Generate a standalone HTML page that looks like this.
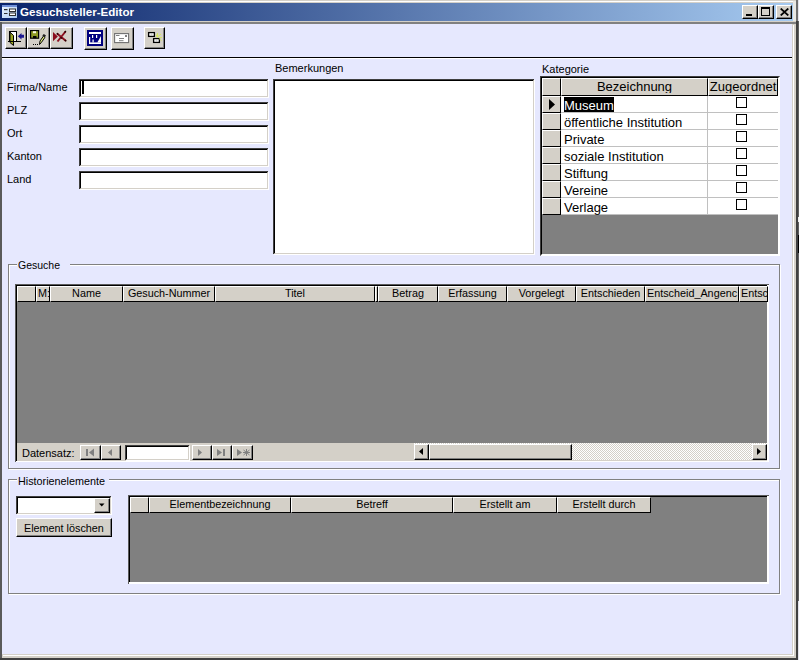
<!DOCTYPE html>
<html><head><meta charset="utf-8">
<style>
*{margin:0;padding:0;box-sizing:border-box}
html,body{width:799px;height:660px;overflow:hidden;background:#d4d0c8;font-family:"Liberation Sans",sans-serif;font-size:11px;color:#000}
.a{position:absolute}
.t{position:absolute;white-space:nowrap;line-height:1}
</style></head><body>
<div class="a" style="left:0px;top:0px;width:799px;height:660px;background:#d4d0c8"></div>
<div class="a" style="left:0px;top:1px;width:797px;height:1px;background:#fff"></div>
<div class="a" style="left:0px;top:21px;width:2px;height:639px;background:#5a5a5a"></div>
<div class="a" style="left:796px;top:21px;width:2px;height:639px;background:#404040"></div>
<div class="a" style="left:796px;top:0px;width:2px;height:21px;background:#707070"></div>
<div class="a" style="left:0px;top:658px;width:798px;height:2px;background:#404040"></div>
<div class="a" style="left:798px;top:0px;width:1px;height:660px;background:#e4e4ec"></div>
<div class="a" style="left:798px;top:21px;width:1px;height:580px;background:#606060"></div>
<div class="a" style="left:798px;top:217px;width:1px;height:5px;background:#f0f0f0"></div>
<div class="a" style="left:798px;top:235px;width:1px;height:18px;background:#000"></div>
<div class="a" style="left:0px;top:3px;width:793px;height:18px;background:linear-gradient(90deg,#0a246a 0%,#a6caf0 100%)"></div>
<div class="a" style="left:793px;top:1px;width:3px;height:20px;background:#e8e8e4"></div>
<svg class="a" style="left:2px;top:5px" width="15" height="14" viewBox="0 0 15 14">
<defs><linearGradient id="ig" x1="0" y1="0" x2="1" y2="1"><stop offset="0" stop-color="#f0f8ff"/><stop offset="1" stop-color="#a8c8f0"/></linearGradient></defs>
<rect x="0" y="0" width="15" height="13" fill="url(#ig)"/><rect x="0" y="0" width="15" height="2" fill="#7090d8"/>
<rect x="2" y="4" width="3.5" height="1.2" fill="#303030"/><rect x="7.5" y="4" width="6" height="2.5" fill="#fff" stroke="#303030" stroke-width="1"/>
<rect x="2" y="8" width="3.5" height="1" fill="#303030"/><rect x="7.5" y="8" width="6" height="2.5" fill="#fff" stroke="#303030" stroke-width="1"/>
</svg>
<div class="t" style="left:20px;top:6px;color:#fff;font-weight:bold;font-size:11.6px">Gesuchsteller-Editor</div>
<div class="a" style="left:742px;top:5px;width:16px;height:14px;background:#d4d0c8;border-top:1px solid #fff;border-left:1px solid #fff;border-right:1px solid #000;border-bottom:1px solid #000;box-shadow:inset -1px -1px 0 #808080;"></div>
<div class="a" style="left:758px;top:5px;width:16px;height:14px;background:#d4d0c8;border-top:1px solid #fff;border-left:1px solid #fff;border-right:1px solid #000;border-bottom:1px solid #000;box-shadow:inset -1px -1px 0 #808080;"></div>
<div class="a" style="left:776px;top:5px;width:16px;height:14px;background:#d4d0c8;border-top:1px solid #fff;border-left:1px solid #fff;border-right:1px solid #000;border-bottom:1px solid #000;box-shadow:inset -1px -1px 0 #808080;"></div>
<div class="a" style="left:746px;top:14px;width:6px;height:2px;background:#000"></div>
<div class="a" style="left:761px;top:7px;width:9px;height:9px;border:1px solid #000;border-top-width:2px"></div>
<svg class="a" style="left:780px;top:8px" width="9" height="8" viewBox="0 0 9 8"><path d="M0.7 0.5 L8.3 7.5 M8.3 0.5 L0.7 7.5" stroke="#000" stroke-width="1.7"/></svg>
<div class="a" style="left:0px;top:21px;width:796px;height:1px;background:#d4d0c8"></div>
<div class="a" style="left:2px;top:22px;width:794px;height:2px;background:#808080"></div>
<div class="a" style="left:2px;top:24px;width:791px;height:631px;background:#e6e8fe;border-right:1px solid #d4d0c8;border-bottom:1px solid #d4d0c8;box-shadow:1px 1px 0 #fff"></div>
<div class="a" style="left:5px;top:27px;width:22px;height:22px;background:#d4d0c8;border-top:1px solid #fff;border-left:1px solid #fff;border-right:1px solid #000;border-bottom:1px solid #000;box-shadow:inset -1px -1px 0 #808080;"></div>
<div class="a" style="left:27px;top:27px;width:23px;height:22px;background:#d4d0c8;border-top:1px solid #fff;border-left:1px solid #fff;border-right:1px solid #000;border-bottom:1px solid #000;box-shadow:inset -1px -1px 0 #808080;"></div>
<div class="a" style="left:50px;top:27px;width:23px;height:22px;background:#d4d0c8;border-top:1px solid #fff;border-left:1px solid #fff;border-right:1px solid #000;border-bottom:1px solid #000;box-shadow:inset -1px -1px 0 #808080;"></div>
<div class="a" style="left:84px;top:27px;width:23px;height:23px;background:#d4d0c8;border-top:1px solid #fff;border-left:1px solid #fff;border-right:1px solid #000;border-bottom:1px solid #000;box-shadow:inset -1px -1px 0 #808080;"></div>
<div class="a" style="left:111px;top:27px;width:23px;height:23px;background:#d4d0c8;border-top:1px solid #fff;border-left:1px solid #fff;border-right:1px solid #000;border-bottom:1px solid #000;box-shadow:inset -1px -1px 0 #808080;"></div>
<div class="a" style="left:144px;top:27px;width:21px;height:22px;background:#d4d0c8;border-top:1px solid #fff;border-left:1px solid #fff;border-right:1px solid #000;border-bottom:1px solid #000;box-shadow:inset -1px -1px 0 #808080;"></div>
<svg class="a" style="left:6px;top:29px" width="20" height="18" viewBox="0 0 20 18">
<rect x="3.5" y="2.5" width="7" height="10" fill="#fff" stroke="#000" stroke-width="1"/>
<path d="M4 3.2 L7.5 6.5 L7.5 16.5 L4 13.5 Z" fill="#9aa41e" stroke="#000" stroke-width="1"/>
<path d="M2 12.5 H15" stroke="#000" stroke-width="1"/>
<path d="M11.8 7.3 L15.5 4 V5.8 H18 V8.8 H15.5 V10.6 Z" fill="#1c1890"/>
</svg>
<svg class="a" style="left:28px;top:28px" width="20" height="19" viewBox="0 0 20 19">
<rect x="2.6" y="2.6" width="8" height="7.6" fill="#8e9a22" stroke="#000" stroke-width="1.2"/>
<rect x="5" y="3.2" width="3" height="2" fill="#f8f8e0"/>
<rect x="5" y="8" width="3.5" height="2.2" fill="#000"/>
<path d="M11.5 16.5 L12 13 L15.5 8 L17 9.3 L13.5 14.3 Z" fill="#e0ee80" stroke="#000" stroke-width="1"/>
<path d="M14.3 7.5 L15.8 6 L18 7.6 L16.8 9.2 Z" fill="#202020"/>
<path d="M5 16.5 h1 M7 16.5 h1 M9 16.5 h1" stroke="#000" stroke-width="1.1"/>
</svg>
<svg class="a" style="left:50px;top:28px" width="20" height="18" viewBox="0 0 20 18">
<path d="M3 4 L7.8 8.6 L3 13.2 Z" fill="#8a0c1c"/>
<path d="M7 5.5 L16 13 M7.5 13.5 L15.5 3.5" stroke="#8e1020" stroke-width="2"/>
<path d="M6.8 5.2 L8.3 6.5 M14.5 4.5 L16 3 M14.8 12 L16.3 13.3 M10.5 9.2 L12.2 10.6" stroke="#200000" stroke-width="1.2"/>
</svg>
<svg class="a" style="left:86px;top:29px" width="18" height="18" viewBox="0 0 18 18">
<rect x="1" y="1" width="16" height="16" fill="#000080"/>
<rect x="3" y="3" width="12" height="2" fill="#fff"/>
<rect x="3" y="8" width="1.2" height="7" fill="#fff"/>
<rect x="3" y="13.4" width="12" height="1.6" fill="#fff"/>
<rect x="6" y="6" width="1.2" height="3" fill="#fff"/><rect x="6.5" y="10.5" width="1.2" height="3" fill="#fff"/>
<rect x="10" y="6" width="1.2" height="3" fill="#fff"/>
<path d="M11.3 13.5 L15 7 V13.5 Z" fill="#fff"/>
</svg>
<svg class="a" style="left:114px;top:33px" width="16" height="11" viewBox="0 0 16 11">
<rect x="0.6" y="0.6" width="14" height="9" fill="#fff" stroke="#707070" stroke-width="1.1"/>
<path d="M2 2.5 H5.5 M5 5.5 H10 M5 7.7 H9.5" stroke="#808080" stroke-width="1"/><rect x="11" y="2" width="2" height="2" fill="#808080"/>
</svg>
<svg class="a" style="left:146px;top:29px" width="18" height="16" viewBox="0 0 18 16">
<rect x="2.6" y="3.6" width="5.8" height="3.8" fill="#fff" stroke="#000" stroke-width="1.3"/>
<rect x="7.6" y="9.6" width="5.8" height="3.8" fill="#fff" stroke="#000" stroke-width="1.3"/>
<path d="M4 4.5 L7 6.5 M7 4.5 L4 6.5 M9 10.5 L12 12.5 M12 10.5 L9 12.5" stroke="#d0d0d0" stroke-width="0.8"/>
<path d="M11.5 4 V8 M11 8.5 L15 5 M13.5 8.5 H16 M13 9.5 L15.5 11.5 M10 5.5 L11 8" stroke="#d8e860" stroke-width="1"/>
</svg>
<div class="a" style="left:2px;top:57px;width:790px;height:1px;background:#000"></div>
<div class="a" style="left:2px;top:58px;width:790px;height:1px;background:#fff"></div>
<div class="a" style="left:79px;top:79px;width:189px;height:18px;background:#fff;border-top:2px solid #000;border-left:2px solid #000;border-right:1px solid #d4d0c8;border-bottom:1px solid #d4d0c8;box-shadow:1px 1px 0 #fff, inset 0 0 0 0 #000"></div>
<div class="a" style="left:79px;top:79px;width:188px;height:1px;background:#404040"></div>
<div class="a" style="left:79px;top:79px;width:1px;height:17px;background:#404040"></div>
<div class="t" style="left:7px;top:82px;font-size:11px">Firma/Name</div>
<div class="a" style="left:79px;top:102px;width:189px;height:18px;background:#fff;border-top:2px solid #000;border-left:2px solid #000;border-right:1px solid #d4d0c8;border-bottom:1px solid #d4d0c8;box-shadow:1px 1px 0 #fff, inset 0 0 0 0 #000"></div>
<div class="a" style="left:79px;top:102px;width:188px;height:1px;background:#404040"></div>
<div class="a" style="left:79px;top:102px;width:1px;height:17px;background:#404040"></div>
<div class="t" style="left:7px;top:105px;font-size:11px">PLZ</div>
<div class="a" style="left:79px;top:125px;width:189px;height:18px;background:#fff;border-top:2px solid #000;border-left:2px solid #000;border-right:1px solid #d4d0c8;border-bottom:1px solid #d4d0c8;box-shadow:1px 1px 0 #fff, inset 0 0 0 0 #000"></div>
<div class="a" style="left:79px;top:125px;width:188px;height:1px;background:#404040"></div>
<div class="a" style="left:79px;top:125px;width:1px;height:17px;background:#404040"></div>
<div class="t" style="left:7px;top:128px;font-size:11px">Ort</div>
<div class="a" style="left:79px;top:148px;width:189px;height:18px;background:#fff;border-top:2px solid #000;border-left:2px solid #000;border-right:1px solid #d4d0c8;border-bottom:1px solid #d4d0c8;box-shadow:1px 1px 0 #fff, inset 0 0 0 0 #000"></div>
<div class="a" style="left:79px;top:148px;width:188px;height:1px;background:#404040"></div>
<div class="a" style="left:79px;top:148px;width:1px;height:17px;background:#404040"></div>
<div class="t" style="left:7px;top:151px;font-size:11px">Kanton</div>
<div class="a" style="left:79px;top:171px;width:189px;height:18px;background:#fff;border-top:2px solid #000;border-left:2px solid #000;border-right:1px solid #d4d0c8;border-bottom:1px solid #d4d0c8;box-shadow:1px 1px 0 #fff, inset 0 0 0 0 #000"></div>
<div class="a" style="left:79px;top:171px;width:188px;height:1px;background:#404040"></div>
<div class="a" style="left:79px;top:171px;width:1px;height:17px;background:#404040"></div>
<div class="t" style="left:7px;top:174px;font-size:11px">Land</div>
<div class="a" style="left:82px;top:81px;width:2px;height:13px;background:#000"></div>
<div class="t" style="left:275px;top:63px;font-size:11px">Bemerkungen</div>
<div class="a" style="left:273px;top:79px;width:261px;height:175px;background:#fff;border-top:2px solid #000;border-left:2px solid #000;border-right:1px solid #d4d0c8;border-bottom:1px solid #d4d0c8;box-shadow:1px 1px 0 #fff, inset 0 0 0 0 #000"></div>
<div class="a" style="left:273px;top:79px;width:260px;height:1px;background:#404040"></div>
<div class="a" style="left:273px;top:79px;width:1px;height:174px;background:#404040"></div>
<div class="t" style="left:542px;top:64px;font-size:11px">Kategorie</div>
<div class="a" style="left:540px;top:76px;width:240px;height:180px;background:#808080;border-left:2px solid #000;border-top:2px solid #000;border-right:2px solid #fff;border-bottom:2px solid #fff"></div>
<div class="a" style="left:540px;top:76px;width:1px;height:179px;background:#404040"></div>
<div class="a" style="left:540px;top:76px;width:239px;height:1px;background:#404040"></div>
<div class="a" style="left:561px;top:96px;width:217px;height:118px;background:#fff"></div>
<div class="a" style="left:561px;top:112px;width:217px;height:1px;background:#c0c0c0"></div>
<div class="a" style="left:561px;top:129px;width:217px;height:1px;background:#c0c0c0"></div>
<div class="a" style="left:561px;top:146px;width:217px;height:1px;background:#c0c0c0"></div>
<div class="a" style="left:561px;top:163px;width:217px;height:1px;background:#c0c0c0"></div>
<div class="a" style="left:561px;top:180px;width:217px;height:1px;background:#c0c0c0"></div>
<div class="a" style="left:561px;top:197px;width:217px;height:1px;background:#c0c0c0"></div>
<div class="a" style="left:561px;top:214px;width:217px;height:1px;background:#c0c0c0"></div>
<div class="a" style="left:707px;top:96px;width:1px;height:118px;background:#c0c0c0"></div>
<div class="a" style="left:542px;top:78px;width:19px;height:18px;background:#d4d0c8;border-left:1px solid #fff;border-top:1px solid #fff;border-right:1px solid #000;border-bottom:1px solid #000"></div>
<div class="a" style="left:561px;top:78px;width:147px;height:18px;background:#d4d0c8;border-left:1px solid #fff;border-top:1px solid #fff;border-right:1px solid #000;border-bottom:1px solid #000"></div>
<div class="a" style="left:708px;top:78px;width:70px;height:18px;background:#d4d0c8;border-left:1px solid #fff;border-top:1px solid #fff;border-right:1px solid #000;border-bottom:1px solid #000"></div>
<div class="t" style="left:561px;top:80px;width:147px;text-align:center;overflow:hidden;font-size:13px">Bezeichnung</div>
<div class="t" style="left:708px;top:80px;width:70px;text-align:center;overflow:hidden;font-size:13px">Zugeordnet</div>
<div class="a" style="left:542px;top:96px;width:19px;height:17px;background:#d4d0c8;border-left:1px solid #fff;border-top:1px solid #fff;border-right:1px solid #000;border-bottom:1px solid #000"></div>
<div class="a" style="left:564px;top:97px;width:50px;height:15px;background:#000"></div>
<div class="t" style="left:564px;top:99px;font-size:13px;color:#fff">Museum</div>
<div class="a" style="left:736px;top:97px;width:11px;height:11px;background:#fff;border:1px solid #000"></div>
<div class="a" style="left:542px;top:113px;width:19px;height:17px;background:#d4d0c8;border-left:1px solid #fff;border-top:1px solid #fff;border-right:1px solid #000;border-bottom:1px solid #000"></div>
<div class="t" style="left:564px;top:116px;font-size:13px">öffentliche Institution</div>
<div class="a" style="left:736px;top:114px;width:11px;height:11px;background:#fff;border:1px solid #000"></div>
<div class="a" style="left:542px;top:130px;width:19px;height:17px;background:#d4d0c8;border-left:1px solid #fff;border-top:1px solid #fff;border-right:1px solid #000;border-bottom:1px solid #000"></div>
<div class="t" style="left:564px;top:133px;font-size:13px">Private</div>
<div class="a" style="left:736px;top:131px;width:11px;height:11px;background:#fff;border:1px solid #000"></div>
<div class="a" style="left:542px;top:147px;width:19px;height:17px;background:#d4d0c8;border-left:1px solid #fff;border-top:1px solid #fff;border-right:1px solid #000;border-bottom:1px solid #000"></div>
<div class="t" style="left:564px;top:150px;font-size:13px">soziale Institution</div>
<div class="a" style="left:736px;top:148px;width:11px;height:11px;background:#fff;border:1px solid #000"></div>
<div class="a" style="left:542px;top:164px;width:19px;height:17px;background:#d4d0c8;border-left:1px solid #fff;border-top:1px solid #fff;border-right:1px solid #000;border-bottom:1px solid #000"></div>
<div class="t" style="left:564px;top:167px;font-size:13px">Stiftung</div>
<div class="a" style="left:736px;top:165px;width:11px;height:11px;background:#fff;border:1px solid #000"></div>
<div class="a" style="left:542px;top:181px;width:19px;height:17px;background:#d4d0c8;border-left:1px solid #fff;border-top:1px solid #fff;border-right:1px solid #000;border-bottom:1px solid #000"></div>
<div class="t" style="left:564px;top:184px;font-size:13px">Vereine</div>
<div class="a" style="left:736px;top:182px;width:11px;height:11px;background:#fff;border:1px solid #000"></div>
<div class="a" style="left:542px;top:198px;width:19px;height:17px;background:#d4d0c8;border-left:1px solid #fff;border-top:1px solid #fff;border-right:1px solid #000;border-bottom:1px solid #000"></div>
<div class="t" style="left:564px;top:201px;font-size:13px">Verlage</div>
<div class="a" style="left:736px;top:199px;width:11px;height:11px;background:#fff;border:1px solid #000"></div>
<svg class="a" style="left:548px;top:99px" width="8" height="11" viewBox="0 0 8 11"><path d="M1 0 L7 5.5 L1 11 Z" fill="#000"/></svg>
<div class="a" style="left:8px;top:264px;width:772px;height:205px;border:1px solid #808080;box-shadow:inset 1px 1px 0 #fff, 1px 1px 0 #fff"></div>
<div class="a" style="left:17px;top:258px;width:53px;height:12px;background:#e6e8fe"></div>
<div class="t" style="left:18px;top:260px;font-size:11px;font-size:10.5px">Gesuche</div>
<div class="a" style="left:15px;top:284px;width:754px;height:178px;background:#000;border-left:1px solid #5a5a5a;border-top:1px solid #5a5a5a"></div>
<div class="a" style="left:17px;top:286px;width:750px;height:157px;background:#808080"></div>
<div class="a" style="left:767px;top:285px;width:2px;height:177px;background:#fff"></div>
<div class="a" style="left:16px;top:461px;width:753px;height:1px;background:#fff"></div>
<div class="a" style="left:17px;top:286px;width:19px;height:16px;background:#d4d0c8;border-left:1px solid #fff;border-top:1px solid #fff;border-right:1px solid #000;border-bottom:1px solid #000"></div>
<div class="a" style="left:36px;top:286px;width:14px;height:16px;background:#d4d0c8;border-left:1px solid #fff;border-top:1px solid #fff;border-right:1px solid #000;border-bottom:1px solid #000"></div>
<div class="a" style="left:50px;top:286px;width:73px;height:16px;background:#d4d0c8;border-left:1px solid #fff;border-top:1px solid #fff;border-right:1px solid #000;border-bottom:1px solid #000"></div>
<div class="a" style="left:123px;top:286px;width:92px;height:16px;background:#d4d0c8;border-left:1px solid #fff;border-top:1px solid #fff;border-right:1px solid #000;border-bottom:1px solid #000"></div>
<div class="a" style="left:215px;top:286px;width:160px;height:16px;background:#d4d0c8;border-left:1px solid #fff;border-top:1px solid #fff;border-right:1px solid #000;border-bottom:1px solid #000"></div>
<div class="a" style="left:375px;top:286px;width:3px;height:16px;background:#d4d0c8;border-left:1px solid #fff;border-top:1px solid #fff;border-right:1px solid #000;border-bottom:1px solid #000"></div>
<div class="a" style="left:378px;top:286px;width:60px;height:16px;background:#d4d0c8;border-left:1px solid #fff;border-top:1px solid #fff;border-right:1px solid #000;border-bottom:1px solid #000"></div>
<div class="a" style="left:438px;top:286px;width:69px;height:16px;background:#d4d0c8;border-left:1px solid #fff;border-top:1px solid #fff;border-right:1px solid #000;border-bottom:1px solid #000"></div>
<div class="a" style="left:507px;top:286px;width:69px;height:16px;background:#d4d0c8;border-left:1px solid #fff;border-top:1px solid #fff;border-right:1px solid #000;border-bottom:1px solid #000"></div>
<div class="a" style="left:576px;top:286px;width:69px;height:16px;background:#d4d0c8;border-left:1px solid #fff;border-top:1px solid #fff;border-right:1px solid #000;border-bottom:1px solid #000"></div>
<div class="a" style="left:645px;top:286px;width:94px;height:16px;background:#d4d0c8;border-left:1px solid #fff;border-top:1px solid #fff;border-right:1px solid #000;border-bottom:1px solid #000"></div>
<div class="a" style="left:739px;top:286px;width:29px;height:16px;background:#d4d0c8;border-left:1px solid #fff;border-top:1px solid #fff;border-right:1px solid #000;border-bottom:1px solid #000"></div>
<div class="t" style="left:38px;top:288px;font-size:10.8px">M:</div>
<div class="t" style="left:50px;top:288px;width:73px;text-align:center;overflow:hidden;font-size:10.8px">Name</div>
<div class="t" style="left:123px;top:288px;width:92px;text-align:center;overflow:hidden;font-size:10.8px">Gesuch-Nummer</div>
<div class="t" style="left:215px;top:288px;width:160px;text-align:center;overflow:hidden;font-size:10.8px">Titel</div>
<div class="t" style="left:378px;top:288px;width:60px;text-align:center;overflow:hidden;font-size:10.8px">Betrag</div>
<div class="t" style="left:438px;top:288px;width:69px;text-align:center;overflow:hidden;font-size:10.8px">Erfassung</div>
<div class="t" style="left:507px;top:288px;width:69px;text-align:center;overflow:hidden;font-size:10.8px">Vorgelegt</div>
<div class="t" style="left:576px;top:288px;width:69px;text-align:center;overflow:hidden;font-size:10.8px">Entschieden</div>
<div class="t" style="left:647px;top:288px;width:91px;overflow:hidden;font-size:10.8px">Entscheid_Angenc</div>
<div class="t" style="left:741px;top:288px;width:26px;overflow:hidden;font-size:10.8px">Entsc</div>
<div class="a" style="left:17px;top:443px;width:750px;height:18px;background:#d4d0c8"></div>
<div class="t" style="left:22px;top:448px;font-size:11px">Datensatz:</div>
<div class="a" style="left:80px;top:445px;width:21px;height:15px;background:#d4d0c8;border-top:1px solid #fff;border-left:1px solid #fff;border-right:1px solid #000;border-bottom:1px solid #000;box-shadow:inset -1px -1px 0 #808080;"></div>
<div class="a" style="left:101px;top:445px;width:20px;height:15px;background:#d4d0c8;border-top:1px solid #fff;border-left:1px solid #fff;border-right:1px solid #000;border-bottom:1px solid #000;box-shadow:inset -1px -1px 0 #808080;"></div>
<div class="a" style="left:192px;top:445px;width:20px;height:15px;background:#d4d0c8;border-top:1px solid #fff;border-left:1px solid #fff;border-right:1px solid #000;border-bottom:1px solid #000;box-shadow:inset -1px -1px 0 #808080;"></div>
<div class="a" style="left:212px;top:445px;width:20px;height:15px;background:#d4d0c8;border-top:1px solid #fff;border-left:1px solid #fff;border-right:1px solid #000;border-bottom:1px solid #000;box-shadow:inset -1px -1px 0 #808080;"></div>
<div class="a" style="left:232px;top:445px;width:21px;height:15px;background:#d4d0c8;border-top:1px solid #fff;border-left:1px solid #fff;border-right:1px solid #000;border-bottom:1px solid #000;box-shadow:inset -1px -1px 0 #808080;"></div>
<div class="a" style="left:125px;top:445px;width:64px;height:15px;background:#fff;border-top:2px solid #000;border-left:2px solid #000;border-right:1px solid #d4d0c8;border-bottom:1px solid #d4d0c8;box-shadow:1px 1px 0 #fff, inset 0 0 0 0 #000"></div>
<div class="a" style="left:125px;top:445px;width:63px;height:1px;background:#404040"></div>
<div class="a" style="left:125px;top:445px;width:1px;height:14px;background:#404040"></div>
<svg class="a" style="left:80px;top:445px" width="173" height="15" viewBox="0 0 173 15">
<g fill="#808080">
<rect x="6" y="4" width="2" height="7"/><path d="M9 7.5 L14 3.5 V11.5 Z"/>
<path d="M28 7.5 L32 4 V11 Z"/>
<path d="M118 4 L122 7.5 L118 11 Z"/>
<path d="M137 4 L142 7.5 L137 11 Z"/><rect x="143" y="4" width="2" height="7"/>
<path d="M157 4 L162 7.5 L157 11 Z"/>
</g>
<path d="M163.5 5 L169.5 10 M169.5 5 L163.5 10 M166.5 4 V11 M163 7.5 H170" stroke="#808080" stroke-width="1"/>
</svg>
<div class="a" style="left:414px;top:443px;width:353px;height:17px;background-color:#f0eee8;background-image:repeating-conic-gradient(#d4d0c8 0 25%, #fff 0 50%);background-size:2px 2px"></div>
<div class="a" style="left:414px;top:444px;width:15px;height:16px;background:#d4d0c8;border-top:1px solid #fff;border-left:1px solid #fff;border-right:1px solid #000;border-bottom:1px solid #000;box-shadow:inset -1px -1px 0 #808080;"></div>
<div class="a" style="left:429px;top:444px;width:143px;height:16px;background:#d4d0c8;border-top:1px solid #fff;border-left:1px solid #fff;border-right:1px solid #000;border-bottom:1px solid #000;box-shadow:inset -1px -1px 0 #808080;"></div>
<div class="a" style="left:752px;top:444px;width:15px;height:16px;background:#d4d0c8;border-top:1px solid #fff;border-left:1px solid #fff;border-right:1px solid #000;border-bottom:1px solid #000;box-shadow:inset -1px -1px 0 #808080;"></div>
<svg class="a" style="left:414px;top:444px" width="353" height="16" viewBox="0 0 353 16"><path d="M5 7.5 L9 4 V11 Z" fill="#000"/><path d="M343 4 L347 7.5 L343 11 Z" fill="#000"/></svg>
<div class="a" style="left:8px;top:479px;width:772px;height:115px;border:1px solid #808080;box-shadow:inset 1px 1px 0 #fff, 1px 1px 0 #fff"></div>
<div class="a" style="left:17px;top:473px;width:92px;height:12px;background:#e6e8fe"></div>
<div class="t" style="left:18px;top:476px;font-size:11px;font-size:10.8px">Historienelemente</div>
<div class="a" style="left:16px;top:496px;width:95px;height:18px;background:#fff;border-top:2px solid #000;border-left:2px solid #000;border-right:1px solid #d4d0c8;border-bottom:1px solid #d4d0c8;box-shadow:1px 1px 0 #fff, inset 0 0 0 0 #000"></div>
<div class="a" style="left:16px;top:496px;width:94px;height:1px;background:#404040"></div>
<div class="a" style="left:16px;top:496px;width:1px;height:17px;background:#404040"></div>
<div class="a" style="left:94px;top:498px;width:16px;height:15px;background:#d4d0c8;border-top:1px solid #fff;border-left:1px solid #fff;border-right:1px solid #000;border-bottom:1px solid #000;box-shadow:inset -1px -1px 0 #808080;"></div>
<svg class="a" style="left:99px;top:503px" width="6" height="4" viewBox="0 0 6 4"><path d="M0 0.5 H5.5 L2.75 3.5 Z" fill="#000"/></svg>
<div class="a" style="left:16px;top:518px;width:96px;height:19px;background:#d4d0c8;border-top:1px solid #fff;border-left:1px solid #fff;border-right:1px solid #000;border-bottom:1px solid #000;box-shadow:inset -1px -1px 0 #808080;"></div>
<div class="t" style="left:24px;top:523px;font-size:11px;font-size:10.8px">Element löschen</div>
<div class="a" style="left:128px;top:495px;width:641px;height:89px;background:#000;border-left:1px solid #5a5a5a;border-top:1px solid #5a5a5a"></div>
<div class="a" style="left:130px;top:497px;width:638px;height:86px;background:#808080"></div>
<div class="a" style="left:767px;top:496px;width:2px;height:88px;background:#fff"></div>
<div class="a" style="left:129px;top:582px;width:640px;height:2px;background:#fff"></div>
<div class="a" style="left:130px;top:497px;width:19px;height:16px;background:#d4d0c8;border-left:1px solid #fff;border-top:1px solid #fff;border-right:1px solid #000;border-bottom:1px solid #000"></div>
<div class="a" style="left:149px;top:497px;width:142px;height:16px;background:#d4d0c8;border-left:1px solid #fff;border-top:1px solid #fff;border-right:1px solid #000;border-bottom:1px solid #000"></div>
<div class="t" style="left:149px;top:499px;width:142px;text-align:center;overflow:hidden;font-size:10.8px">Elementbezeichnung</div>
<div class="a" style="left:291px;top:497px;width:162px;height:16px;background:#d4d0c8;border-left:1px solid #fff;border-top:1px solid #fff;border-right:1px solid #000;border-bottom:1px solid #000"></div>
<div class="t" style="left:291px;top:499px;width:162px;text-align:center;overflow:hidden;font-size:10.8px">Betreff</div>
<div class="a" style="left:453px;top:497px;width:104px;height:16px;background:#d4d0c8;border-left:1px solid #fff;border-top:1px solid #fff;border-right:1px solid #000;border-bottom:1px solid #000"></div>
<div class="t" style="left:453px;top:499px;width:104px;text-align:center;overflow:hidden;font-size:10.8px">Erstellt am</div>
<div class="a" style="left:557px;top:497px;width:94px;height:16px;background:#d4d0c8;border-left:1px solid #fff;border-top:1px solid #fff;border-right:1px solid #000;border-bottom:1px solid #000"></div>
<div class="t" style="left:557px;top:499px;width:94px;text-align:center;overflow:hidden;font-size:10.8px">Erstellt durch</div>
</body></html>
